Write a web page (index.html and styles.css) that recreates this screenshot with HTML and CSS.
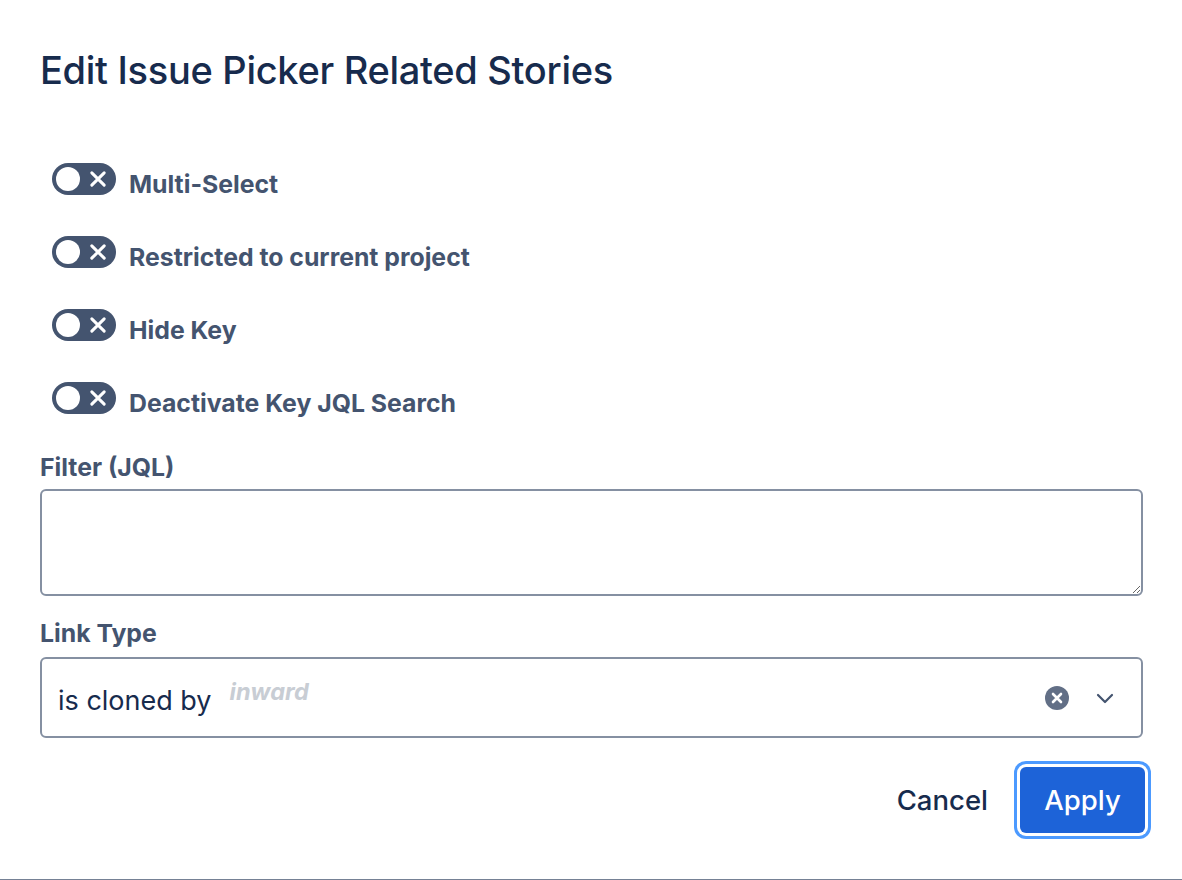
FILE: index.html
```html
<!DOCTYPE html>
<html>
<head>
<meta charset="utf-8">
<link rel="stylesheet" href="styles.css">
</head>
<body>
<div class="page">
  <h1 class="title">Edit Issue Picker Related Stories</h1>
  <div class="toggles">
    <div class="toggle-row"><span class="toggle"><span class="knob"></span><svg class="tx" viewBox="0 0 16 16"><path d="M3.5 3.5 L12.5 12.5 M12.5 3.5 L3.5 12.5" stroke="#fff" stroke-width="2.2" stroke-linecap="round"/></svg></span><span class="toggle-label">Multi-Select</span></div>
    <div class="toggle-row"><span class="toggle"><span class="knob"></span><svg class="tx" viewBox="0 0 16 16"><path d="M3.5 3.5 L12.5 12.5 M12.5 3.5 L3.5 12.5" stroke="#fff" stroke-width="2.2" stroke-linecap="round"/></svg></span><span class="toggle-label">Restricted to current project</span></div>
    <div class="toggle-row"><span class="toggle"><span class="knob"></span><svg class="tx" viewBox="0 0 16 16"><path d="M3.5 3.5 L12.5 12.5 M12.5 3.5 L3.5 12.5" stroke="#fff" stroke-width="2.2" stroke-linecap="round"/></svg></span><span class="toggle-label">Hide Key</span></div>
    <div class="toggle-row"><span class="toggle"><span class="knob"></span><svg class="tx" viewBox="0 0 16 16"><path d="M3.5 3.5 L12.5 12.5 M12.5 3.5 L3.5 12.5" stroke="#fff" stroke-width="2.2" stroke-linecap="round"/></svg></span><span class="toggle-label">Deactivate Key JQL Search</span></div>
  </div>
  <label class="field-label">Filter (JQL)</label>
  <textarea class="textarea"></textarea>
  <label class="field-label link-label">Link Type</label>
  <div class="select">
    <span class="value">is cloned by</span>
    <span class="hint">inward</span>
    <span class="spacer"></span>
    <svg class="clear" viewBox="0 0 24 24"><circle cx="12" cy="12" r="12" fill="#626F86"/><path d="M8 8 L16 16 M16 8 L8 16" stroke="#fff" stroke-width="2.6" stroke-linecap="round"/></svg>
    <svg class="chev" viewBox="0 0 24 24"><path d="M5 9 L12 16 L19 9" fill="none" stroke="#44546F" stroke-width="2.2" stroke-linecap="round" stroke-linejoin="round"/></svg>
  </div>
  <div class="actions">
    <button class="btn cancel">Cancel</button>
    <button class="btn apply">Apply</button>
  </div>
</div>
<div class="bottom-line"></div>
</body>
</html>
```
FILE: styles.css
```css
html, body {
  margin: 0;
  padding: 0;
  background: #fff;
  font-family: Inter, "Noto Sans", sans-serif;
}
.page {
  padding: 44px 39px 0 40px;
}
.title {
  margin: 0;
  font-size: 38px;
  font-weight: 500;
  color: #172B4D;
  line-height: 52px;
  letter-spacing: -0.3px;
}
.toggles {
  margin-top: 67px;
  display: flex;
  flex-direction: column;
  gap: 41px;
}
.toggle-row {
  display: flex;
  align-items: center;
  height: 32px;
}
.toggle {
  display: inline-flex;
  align-items: center;
  justify-content: space-between;
  width: 64px;
  height: 32px;
  border-radius: 16px;
  background: #44546F;
  box-sizing: border-box;
  padding: 0 7px 0 4px;
  margin-left: 12px;
  flex: none;
}
.knob {
  width: 24px;
  height: 24px;
  border-radius: 50%;
  background: #fff;
}
.tx {
  width: 22px;
  height: 22px;
}
.toggle-label {
  margin-left: 13px;
  font-size: 24.8px;
  font-weight: 700;
  color: #44546F;
  position: relative;
  top: 5px;
}
.field-label {
  display: block;
  font-size: 24.8px;
  font-weight: 700;
  color: #44546F;
  margin-top: 38px;
  line-height: 30px;
}
.textarea {
  display: block;
  width: 100%;
  height: 107px;
  box-sizing: border-box;
  margin-top: 7px;
  border: 2px solid #8590A2;
  border-radius: 6px;
  resize: vertical;
  font-family: inherit;
}
.link-label {
  margin-top: 22px;
}
.select {
  margin-top: 9px;
  height: 81px;
  box-sizing: border-box;
  border: 2px solid #8590A2;
  border-radius: 6px;
  display: flex;
  align-items: center;
  padding: 0 24px 0 16px;
}
.value {
  font-size: 27px;
  color: #172B4D;
  position: relative;
  top: 3px;
}
.hint {
  margin-left: 18px;
  font-size: 23.5px;
  font-weight: 700;
  font-style: italic;
  color: #C8CDD4;
  position: relative;
  top: -6px;
}
.spacer { flex: 1; }
.clear {
  width: 24px;
  height: 24px;
}
.chev {
  width: 24px;
  height: 24px;
  margin-left: 24px;
}
.actions {
  margin-top: 29px;
  display: flex;
  justify-content: flex-end;
  align-items: center;
  gap: 16px;
}
.btn {
  font-family: inherit;
  font-size: 27.5px;
  font-weight: 500;
  border: none;
  background: none;
  cursor: pointer;
}
.cancel {
  color: #172B4D;
  padding: 0 16px;
  height: 66px;
}
.apply {
  background: #1D63D8;
  color: #fff;
  height: 66px;
  padding: 0;
  border-radius: 6px;
  box-shadow: 0 0 0 3px #fff, 0 0 0 6px #4C9AFF;
  width: 125px;
  margin-right: -2px;
}
.bottom-line {
  height: 2px;
  background: #758195;
  margin-top: 46px;
}
```
